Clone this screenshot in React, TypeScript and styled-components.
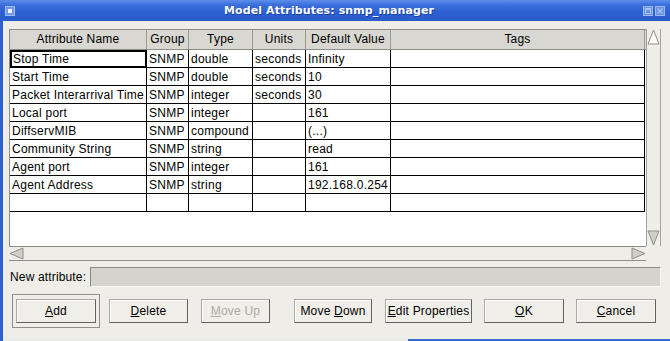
import React from "react";
import styled, { createGlobalStyle } from "styled-components";

const Global = createGlobalStyle`
  html, body { margin: 0; padding: 0; background: #eeede8; overflow: hidden; }
  body { font-family: "Liberation Sans", Arial, sans-serif; }
  #root { width: 670px; height: 341px; }
`;

const COLS = "137px 42px 64px 53px 85px 254px";

const Window = styled.div`
  width: 670px;
  height: 341px;
  display: flex;
  flex-direction: column;
  background: #eeede8;
  overflow: hidden;
`;

const TitleBar = styled.div`
  flex: 0 0 21px;
  height: 21px;
  box-sizing: border-box;
  display: flex;
  align-items: center;
  padding: 0 5px;
  background: linear-gradient(to bottom, #5b8fe9 0%, #3a6ddb 25%, #2c60d2 60%, #2a5bc9 100%);
`;

const TitleText = styled.div`
  flex: 1;
  text-align: center;
  color: #ffffff;
  font: bold 11px "DejaVu Sans", Verdana, sans-serif;
  letter-spacing: 0.1px;
  text-shadow: 1px 1px 0 #1d3f9c;
  white-space: nowrap;
`;

const TitleButtons = styled.div`
  display: flex;
  gap: 2px;
`;

const Body = styled.div`
  flex: 1;
  display: flex;
  min-height: 0;
`;

const LeftFrame = styled.div`
  flex: 0 0 3px;
  background: #2d5fcf;
`;

const Content = styled.div`
  flex: 1;
  display: flex;
  flex-direction: column;
  padding: 8px 9px 0 6px;
  min-width: 0;
`;

const TablePanel = styled.div`
  display: grid;
  grid-template-columns: 637px 15px;
  grid-template-rows: 217px 15px;
`;

const Viewport = styled.div`
  background: #ffffff;
  border-left: 1px solid #8c8c88;
  display: flex;
  flex-direction: column;
  overflow: hidden;
`;

const HeaderRow = styled.div`
  display: grid;
  grid-template-columns: ${COLS};
  height: 21px;
  box-sizing: border-box;
  background: #d8d7d1;
  border-top: 1px solid #8c8c88;
  border-bottom: 1px solid #8c8c88;
  margin-right: -1px;
`;

const HeaderCell = styled.div`
  border-right: 1px solid #9a9994;
  font-size: 12px;
  letter-spacing: 0.2px;
  line-height: 18px;
  text-align: center;
  color: #000;
  white-space: nowrap;
  overflow: hidden;
`;

const DataRow = styled.div`
  display: grid;
  grid-template-columns: ${COLS};
  height: 18px;
`;

const Cell = styled.div<{ $focus?: boolean }>`
  box-sizing: border-box;
  border-right: 1px solid #000;
  border-bottom: 1px solid #000;
  padding: 0 2px;
  font-size: 12px;
  letter-spacing: 0.25px;
  line-height: 18px;
  color: #000;
  white-space: nowrap;
  overflow: hidden;
  ${(p) => (p.$focus ? "box-shadow: inset 2px 2px 0 #000, inset -1px -1px 0 #000; padding-left: 3px;" : "")}
`;

const EmptyArea = styled.div`
  flex: 1;
`;

const VScroll = styled.div`
  background: #eeede8;
  border-left: 1px solid #a3a29d;
  border-right: 1px solid #a3a29d;
  display: flex;
  flex-direction: column;
  justify-content: space-between;
`;

const HScroll = styled.div`
  background: #eeede8;
  border-top: 1px solid #8c8c88;
  border-bottom: 1px solid #8c8c88;
  display: flex;
  justify-content: space-between;
  align-items: stretch;
`;

const Corner = styled.div`
  background: #eeede8;
`;

const ArrowBox = styled.div<{ $w: number; $h: number }>`
  width: ${(p) => p.$w}px;
  height: ${(p) => p.$h}px;
  display: flex;
`;

const NewAttrRow = styled.div`
  display: flex;
  align-items: center;
  margin-top: 6px;
  height: 20px;
`;

const Label = styled.div`
  width: 80px;
  padding-left: 1px;
  font-size: 12px;
  letter-spacing: 0.15px;
  color: #000;
  white-space: nowrap;
`;

const Field = styled.div`
  flex: 1;
  height: 20px;
  box-sizing: border-box;
  background: #d4d3cd;
  border-top: 1px solid #8a8a86;
  border-left: 1px solid #8a8a86;
  border-right: 1px solid #f6f6f2;
  border-bottom: 1px solid #f6f6f2;
`;

const ButtonRow = styled.div`
  display: flex;
  align-items: center;
  margin-top: 7px;
  padding-left: 3px;
`;

const DefaultFrame = styled.div`
  border: 1px solid #8f8e89;
  padding: 4px 3px;
  display: flex;
`;

const Button = styled.button<{ $w: number; $ml?: number }>`
  width: ${(p) => p.$w}px;
  height: 24px;
  margin: 0 0 0 ${(p) => p.$ml ?? 0}px;
  padding: 0;
  box-sizing: border-box;
  background: #efeee9;
  border-style: solid;
  border-width: 1px;
  border-color: #a9a8a3 #62625f #62625f #a9a8a3;
  box-shadow: inset 1px 1px 0 #ffffff;
  font-family: "Liberation Sans", Arial, sans-serif;
  font-size: 12px;
  letter-spacing: 0.2px;
  color: ${(p) => (p.disabled ? "#acaba6" : "#000")};
  white-space: nowrap;
  cursor: default;
`;

const Mn = styled.span`
  text-decoration: underline;
  text-underline-offset: 1px;
`;

const BottomStrip = styled.div`
  flex: 0 0 2px;
  display: flex;
`;

const StripPart = styled.div<{ $w?: number; $c: string }>`
  ${(p) => (p.$w ? `width: ${p.$w}px;` : "flex: 1;")}
  background: ${(p) => p.$c};
`;

const AppIcon = () => (
  <svg width="10" height="10" viewBox="0 0 10 10">
    <rect x="0.5" y="0.5" width="9" height="9" fill="#6f98e8" stroke="#9dbcf2" />
    <rect x="3" y="3" width="4" height="4" fill="#f4f8ff" />
  </svg>
);

const MaxIcon = () => (
  <svg width="10" height="10" viewBox="0 0 10 10">
    <rect x="0.5" y="0.5" width="9" height="9" fill="#6a93e4" stroke="#9ab8ee" />
    <rect x="2.5" y="2.5" width="5" height="5" fill="none" stroke="#a9c3f0" />
    <line x1="2.5" y1="3.5" x2="7.5" y2="3.5" stroke="#a9c3f0" />
  </svg>
);

const CloseIcon = () => (
  <svg width="10" height="10" viewBox="0 0 10 10">
    <rect x="0.5" y="0.5" width="9" height="9" fill="#6a93e4" stroke="#9ab8ee" />
    <path d="M2.5 2.5 L7.5 7.5 M7.5 2.5 L2.5 7.5" stroke="#a9c3f0" strokeWidth="1.2" />
  </svg>
);

type Dir = "up" | "down" | "left" | "right";

const Arrow = ({ dir, w, h }: { dir: Dir; w: number; h: number }) => {
  let pts = "";
  if (dir === "up") pts = `${w / 2},1 ${w - 1},${h - 1} 1,${h - 1}`;
  if (dir === "down") pts = `1,1 ${w - 1},1 ${w / 2},${h - 1}`;
  if (dir === "left") pts = `1,${h / 2} ${w - 1},1 ${w - 1},${h - 1}`;
  if (dir === "right") pts = `1,1 ${w - 1},${h / 2} 1,${h - 1}`;
  const fill = dir === "up" ? "#fafaf8" : "#cfcec9";
  return (
    <ArrowBox $w={w} $h={h}>
      <svg width={w} height={h} viewBox={`0 0 ${w} ${h}`}>
        <polygon points={pts} fill={fill} stroke="#8e8d88" strokeWidth="1" />
      </svg>
    </ArrowBox>
  );
};

const headers = ["Attribute Name", "Group", "Type", "Units", "Default Value", "Tags"];

const rows: string[][] = [
  ["Stop Time", "SNMP", "double", "seconds", "Infinity", ""],
  ["Start Time", "SNMP", "double", "seconds", "10", ""],
  ["Packet Interarrival Time", "SNMP", "integer", "seconds", "30", ""],
  ["Local port", "SNMP", "integer", "", "161", ""],
  ["DiffservMIB", "SNMP", "compound", "", "(...)", ""],
  ["Community String", "SNMP", "string", "", "read", ""],
  ["Agent port", "SNMP", "integer", "", "161", ""],
  ["Agent Address", "SNMP", "string", "", "192.168.0.254", ""],
  ["", "", "", "", "", ""],
];

export default function App() {
  return (
    <>
      <Global />
      <Window>
        <TitleBar>
          <AppIcon />
          <TitleText>Model Attributes: snmp_manager</TitleText>
          <TitleButtons>
            <MaxIcon />
            <CloseIcon />
          </TitleButtons>
        </TitleBar>
        <Body>
          <LeftFrame />
          <Content>
            <TablePanel>
              <Viewport>
                <HeaderRow>
                  {headers.map((h) => (
                    <HeaderCell key={h}>{h}</HeaderCell>
                  ))}
                </HeaderRow>
                {rows.map((r, i) => (
                  <DataRow key={i}>
                    {r.map((c, j) => (
                      <Cell key={j} $focus={i === 0 && j === 0}>
                        {c}
                      </Cell>
                    ))}
                  </DataRow>
                ))}
                <EmptyArea />
              </Viewport>
              <VScroll>
                <Arrow dir="up" w={13} h={16} />
                <Arrow dir="down" w={13} h={16} />
              </VScroll>
              <HScroll>
                <Arrow dir="left" w={15} h={13} />
                <Arrow dir="right" w={15} h={13} />
              </HScroll>
              <Corner />
            </TablePanel>
            <NewAttrRow>
              <Label>New attribute:</Label>
              <Field />
            </NewAttrRow>
            <ButtonRow>
              <DefaultFrame>
                <Button $w={80}>
                  <Mn>A</Mn>dd
                </Button>
              </DefaultFrame>
              <Button $w={79} $ml={9}>
                <Mn>D</Mn>elete
              </Button>
              <Button $w={69} $ml={13} disabled>
                <Mn>M</Mn>ove Up
              </Button>
              <Button $w={78} $ml={24}>
                Move <Mn>D</Mn>own
              </Button>
              <Button $w={87} $ml={13}>
                <Mn>E</Mn>dit Properties
              </Button>
              <Button $w={80} $ml={12}>
                <Mn>O</Mn>K
              </Button>
              <Button $w={80} $ml={12}>
                <Mn>C</Mn>ancel
              </Button>
            </ButtonRow>
          </Content>
        </Body>
        <BottomStrip>
          <StripPart $w={3} $c="#2d5fcf" />
          <StripPart $w={405} $c="#e9e9e6" />
          <StripPart $c="#3b6bd6" />
        </BottomStrip>
      </Window>
    </>
  );
}
